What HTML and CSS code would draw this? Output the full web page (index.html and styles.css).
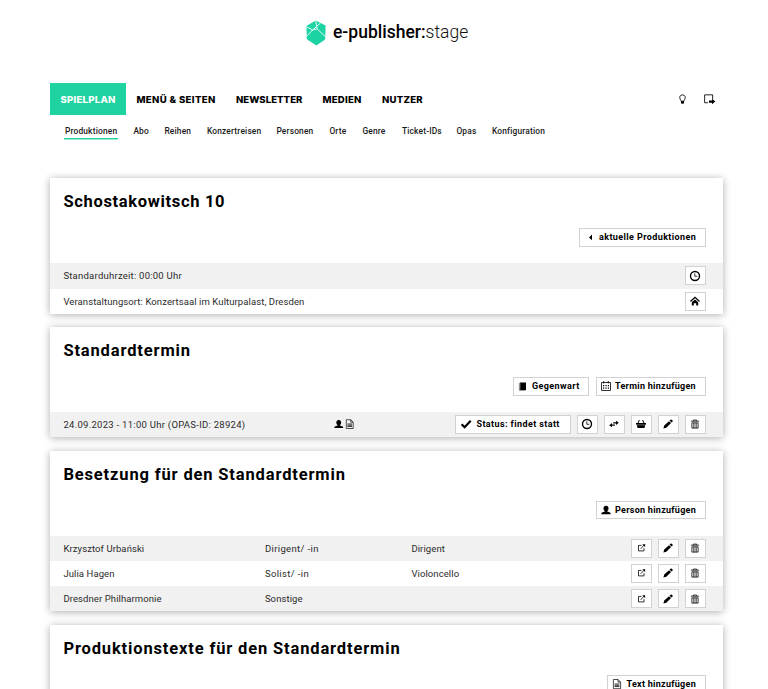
FILE: index.html
```html
<!DOCTYPE html>
<html lang="de">
<head>
<meta charset="utf-8">
<title>e-publisher:stage</title>
<link rel="stylesheet" href="styles.css">
</head>
<body>
<svg class="sprite" aria-hidden="true">
  <symbol id="clock" viewBox="0 0 12 12"><circle cx="6" cy="6" r="4.5" fill="none" stroke="currentColor" stroke-width="1.4"/><path d="M5.8 3.3v3h2.5" fill="none" stroke="currentColor" stroke-width=".8"/></symbol>
  <symbol id="home" viewBox="0 0 12 12"><path d="M1.5 6.4 6 2.3l4.5 4.1" fill="none" stroke="currentColor" stroke-width="1.3"/><path d="M2.8 7.3 6 4.4l3.2 2.9v3.2h-2V8.2H4.800v2.300h-2z" fill="currentColor"/></symbol>
  <symbol id="left" viewBox="0 0 12 12"><path d="M8 3.600v5.600L5 6.400z" fill="currentColor"/></symbol>
  <symbol id="book" viewBox="0 0 12 12"><path d="M3.200 2.500H9V10H3.200z" fill="currentColor"/><path d="M3.200 2.500 2.400 3.300v7h6" fill="none" stroke="currentColor" stroke-width=".5"/></symbol>
  <symbol id="calendar" viewBox="0 0 12 12"><path d="M1.500 2.500h9v8h-9zM3.700 1v2.500M8.300 1v2.500" fill="none" stroke="currentColor" stroke-width=".8"/><path d="M3 5.700h6M3 8.200h6" stroke="currentColor" stroke-width="1.2" stroke-dasharray="1.2"/></symbol>
  <symbol id="person" viewBox="0 0 12 12"><ellipse cx="6" cy="4.500" rx="2.500" ry="2.800" fill="currentColor"/><path d="M4.800 6.500h2.400v1l2.900 1.100q.6.500.6 1.700H1.300q0-1.200.6-1.700l2.900-1.100z" fill="currentColor"/></symbol>
  <symbol id="doc" viewBox="0 0 12 12"><path d="M2.400 1.500H7l2.600 2.600v6.600H2.400zM7 1.500v2.600h2.600" fill="none" stroke="currentColor" stroke-width=".7"/><path d="M3.600 6h4.800M3.600 7.300h4.800M3.600 8.600h4.800" stroke="currentColor" stroke-width=".8"/></symbol>
  <symbol id="check" viewBox="0 0 12 12"><path d="m1.600 6.200 3 3 6.100-6.500" fill="none" stroke="currentColor" stroke-width="2.200"/></symbol>
  <symbol id="swap" viewBox="0 0 12 12"><path d="M5.200 4.800h3.400M3.400 7.200h3.400" stroke="currentColor" stroke-width="1.2"/><path d="m8 2.700 2.800 2.100L8 6.900zM4 5.100 1.200 7.200 4 9.300z" fill="currentColor"/></symbol>
  <symbol id="basket" viewBox="0 0 12 12"><path d="M1 5h10v1.500h-.7L9.400 10H2.600l-.9-3.500H1z" fill="currentColor"/><path d="m3 5 1.400-3M9 5 7.600 2" stroke="currentColor"/><path d="M2 6.900h8" stroke="#fff" stroke-width=".4"/></symbol>
  <symbol id="pencil" viewBox="0 0 12 12"><path d="m1.400 10.600.8-3L7 3.200 9.100 5 4.300 9.700zM7.600 2.700l.9-.9q.7-.6 1.300 0l.7.700q.5.600 0 1.200l-.8.900z" fill="currentColor"/></symbol>
  <symbol id="trash" viewBox="0 0 12 12"><path d="M1.900 3.200h8.200M4.300 3V2.100h3.400V3M2.900 4.800h6.200v5.300H2.900z" fill="none" stroke="currentColor" stroke-width=".8"/><path d="M4.600 5v5M6 5v5M7.400 5v5" stroke="currentColor" stroke-width=".6"/></symbol>
  <symbol id="external" viewBox="0 0 12 12"><path d="M6.500 3.400h-3v5.500H9V6.200M5.700 6.800l3.600-3.900" fill="none" stroke="currentColor" stroke-width=".8"/><path d="M7.300 2.200h2.800V5z" fill="currentColor"/></symbol>
</svg>

<header class="brand">
  <svg class="brand-mark" viewBox="0 0 20 26"><path d="M9.700.6 19.600 5.500 19.200 19.400 10.400 25.400.8 19.200.5 6z" fill="#1bd3a3"/><path d="m.6 6.800 6 3.200L.8 16M6.600 10 14.500 3M6.600 10l4.500-1.200L19.300 16.500M11.100 8.800 9.700.6" fill="none" stroke="#e6fcf5"/></svg>
  <div class="brand-name"><strong>e-publisher:</strong>stage</div>
</header>

<div class="page">
  <nav class="main-nav">
    <a class="active">SPIELPLAN</a><a class="menu">MENÜ &amp; SEITEN</a><a class="news">NEWSLETTER</a><a>MEDIEN</a><a>NUTZER</a>
    <div class="tools">
      <svg viewBox="0 0 12 12"><path d="M4.700 7.600Q4.600 6.800 4 5.900Q3.100 4.500 3.700 3Q4.400 1.700 6 1.700T8.300 3Q8.900 4.500 8 5.900Q7.400 6.800 7.300 7.600z" fill="none" stroke="currentColor" stroke-width=".8"/><path d="M4.600 7.500h2.800v1.700l-.7.800H5.300l-.7-.8z" fill="currentColor"/></svg>
      <svg viewBox="0 0 12 12"><path d="M4.600 9H1.500V1.700h7.400V5.500" fill="none" stroke="currentColor" stroke-width=".8"/><path d="M5.500 6.900h2.800V5.400l3 2.500-3 2.500V8.900H5.500z" fill="currentColor"/></svg>
    </div>
  </nav>
  <nav class="sub-nav">
    <a><span class="current">Produktionen</span></a><a>Abo</a><a>Reihen</a><a>Konzertreisen</a><a>Personen</a><a>Orte</a><a>Genre</a><a>Ticket-IDs</a><a>Opas</a><a>Konfiguration</a>
  </nav>

  <section class="card">
    <div class="card-head">
      <h2 class="production-title">Schostakowitsch 10</h2>
      <div class="actions"><a class="btn back"><svg><use href="#left"/></svg><span>aktuelle Produktionen</span></a></div>
    </div>
    <div class="row time"><span>Standarduhrzeit: 00:00 Uhr</span><div class="icons"><a class="btn icon"><svg><use href="#clock"/></svg></a></div></div>
    <div class="row"><span>Veranstaltungsort: Konzertsaal im Kulturpalast, Dresden</span><div class="icons"><a class="btn icon"><svg><use href="#home"/></svg></a></div></div>
  </section>

  <section class="card">
    <div class="card-head">
      <h2>Standardtermin</h2>
      <div class="actions">
        <a class="btn now"><svg><use href="#book"/></svg><span>Gegenwart</span></a>
        <a class="btn add add-date"><svg><use href="#calendar"/></svg><span>Termin hinzufügen</span></a>
      </div>
    </div>
    <div class="row event">
      <span>24.09.2023 - 11:00 Uhr (OPAS-ID: 28924)</span>
      <div class="marks"><svg><use href="#person"/></svg><svg><use href="#doc"/></svg></div>
      <div class="icons">
        <a class="btn status"><svg><use href="#check"/></svg><span>Status: findet statt</span></a>
        <a class="btn icon"><svg><use href="#clock"/></svg></a>
        <a class="btn icon"><svg><use href="#swap"/></svg></a>
        <a class="btn icon"><svg><use href="#basket"/></svg></a>
        <a class="btn icon"><svg><use href="#pencil"/></svg></a>
        <a class="btn icon"><svg><use href="#trash"/></svg></a>
      </div>
    </div>
  </section>

  <section class="card">
    <div class="card-head">
      <h2>Besetzung für den Standardtermin</h2>
      <div class="actions"><a class="btn add add-person"><svg><use href="#person"/></svg><span>Person hinzufügen</span></a></div>
    </div>
    <div class="row cast">
      <span>Krzysztof Urbański</span><span class="role">Dirigent/ -in</span><span>Dirigent</span>
      <div class="icons"><a class="btn icon"><svg><use href="#external"/></svg></a><a class="btn icon"><svg><use href="#pencil"/></svg></a><a class="btn icon"><svg><use href="#trash"/></svg></a></div>
    </div>
    <div class="row cast">
      <span>Julia Hagen</span><span class="role">Solist/ -in</span><span>Violoncello</span>
      <div class="icons"><a class="btn icon"><svg><use href="#external"/></svg></a><a class="btn icon"><svg><use href="#pencil"/></svg></a><a class="btn icon"><svg><use href="#trash"/></svg></a></div>
    </div>
    <div class="row cast">
      <span>Dresdner Philharmonie</span><span>Sonstige</span><span></span>
      <div class="icons"><a class="btn icon"><svg><use href="#external"/></svg></a><a class="btn icon"><svg><use href="#pencil"/></svg></a><a class="btn icon"><svg><use href="#trash"/></svg></a></div>
    </div>
  </section>

  <section class="card">
    <div class="card-head">
      <h2>Produktionstexte für den Standardtermin</h2>
      <div class="actions"><a class="btn add add-text"><svg><use href="#doc"/></svg><span>Text hinzufügen</span></a></div>
    </div>
  </section>
</div>
</body>
</html>
```
FILE: styles.css
```css
* { box-sizing: border-box; }
html { overflow: hidden; }
body {
  margin: 0;
  height: 689px;
  overflow: hidden;
  background: #fff;
  color: #2b2b2b;
  font-family: Roboto, "Liberation Sans", sans-serif;
  font-size: 9.5px;
}
.sprite { display: none; }

.brand {
  display: flex;
  height: 83.3px;
  padding: 20px 0 0 306px;
}
.brand-mark { width: 20px; height: 26px; }
.brand-name {
  margin-left: 7px;
  font-size: 17.5px;
  line-height: 24px;
  font-weight: 300;
  color: #111;
  white-space: nowrap;
}
.brand-name strong { font-weight: 500; color: #000; }

.page { width: 672.6px; margin-left: 50.4px; }

.main-nav {
  display: grid;
  grid-template-columns: 76px 99.5px 86.5px 59.5px 60px 1fr;
  height: 31.7px;
  line-height: 29.7px;
  font-family: Inter, "Open Sans", sans-serif;
  font-size: 9.6px;
  font-weight: 800;
  letter-spacing: .25px;
  color: #000;
  white-space: nowrap;
}
.main-nav a { padding: 2px 0 0 10px; }
.main-nav .active { background: #1fd3a0; color: #fff; }
.main-nav .menu { letter-spacing: .36px; }
.main-nav .news { letter-spacing: .05px; }
.tools { display: flex; justify-content: flex-end; align-items: center; gap: 14px; padding-right: 7px; }
.tools svg { width: 13px; height: 13px; }

.sub-nav {
  display: grid;
  grid-template-columns: 68.5px 31px 42.5px 69.5px 53px 33px 39.5px 54.5px 35.5px 60px;
  height: 63px;
  padding: 9px 0 0 14.5px;
  line-height: 14px;
  font-size: 8.4px;
  font-weight: 500;
  letter-spacing: .18px;
  color: #1a1a1a;
  white-space: nowrap;
}
.current {
  display: block;
  width: 54px;
  height: 15px;
  margin-left: -1px;
  padding-left: 1px;
  border-bottom: 1px solid #1fd3a0;
  box-shadow: 0 1px #9aebd3;
}

.card {
  margin-bottom: 13.5px;
  background: #fff;
  box-shadow: 0 1px 8px rgba(0, 0, 0, .32);
}
.card:first-of-type { margin-bottom: 12.9px; }
.card-head { height: 85px; padding: 13px 17px 0 13px; }
h2 {
  height: 37px;
  margin: 0;
  color: #000;
  font-size: 16.5px;
  line-height: 22px;
  font-weight: 700;
  letter-spacing: .85px;
  white-space: nowrap;
}
.production-title { letter-spacing: .67px; }
.actions { display: flex; justify-content: flex-end; gap: 7px; }
.btn {
  display: flex;
  align-items: center;
  height: 18.8px;
  border: 1px solid #d2d2d2;
  background: #fff;
  color: #000;
  font-size: 9px;
  font-weight: 700;
  letter-spacing: .4px;
  white-space: nowrap;
}
.btn svg { flex: none; width: 12px; height: 12px; }
.back { width: 127px; padding-left: 4px; }
.back span { margin-left: 3px; }
.now { width: 76px; padding-left: 3.5px; }
.now span { margin-left: 2.5px; }
.add { letter-spacing: .28px; }
.add span { margin-left: 3px; }
.add-date, .add-person { width: 110px; padding-left: 3px; }
.add-text { width: 99px; padding-left: 3.5px; }
.status { width: 116px; padding-left: 4px; }
.status span { margin-left: 4.5px; }
.icon { width: 21px; justify-content: center; }

.row {
  display: flex;
  align-items: center;
  height: 25.2px;
  padding: 0 17px 0 13px;
  letter-spacing: .09px;
}
.row:nth-child(even) { background: #f1f1f1; }
.row.time { height: 25.8px; letter-spacing: .24px; }
.event { letter-spacing: .28px; }
.role { letter-spacing: .36px; }
.icons { display: flex; gap: 6px; margin-left: auto; }
.event > span { width: 269.5px; }
.marks { display: flex; color: #000; }
.marks svg { width: 11.5px; height: 12px; }
.cast { display: grid; grid-template-columns: 201.5px 146.5px 1fr auto; }
```
